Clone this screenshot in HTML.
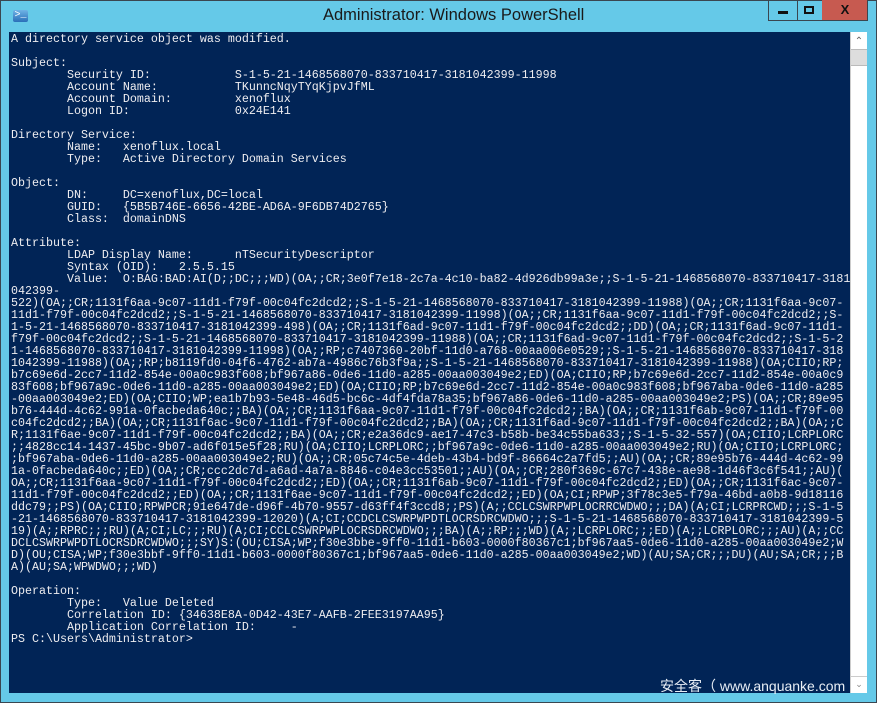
<!DOCTYPE html>
<html><head><meta charset="utf-8"><style>
html,body{margin:0;padding:0}
body{width:877px;height:703px;background:#65c9e8;position:relative;overflow:hidden;font-family:"Liberation Sans",sans-serif}
.frame{position:absolute;left:0;top:0;width:875px;height:701px;border:1px solid #3a4650}
.title{position:absolute;left:323px;top:6px;text-align:left;font-size:16.5px;color:#1a1a1a;white-space:nowrap}
.icon{position:absolute;left:13px;top:10px;width:15px;height:12px;background:linear-gradient(#6fb3e6,#2a6fb8);border-radius:2px;color:#fff;font-size:10px;line-height:12px;text-align:center;font-family:"Liberation Mono",monospace}
.btn{position:absolute;top:0;height:21px;border:1px solid #3a4650;border-top:none;box-sizing:border-box}
.con{position:absolute;left:9px;top:32px;width:841px;height:661px;background:#012456}
pre{position:absolute;left:11px;top:33px;margin:0;font-family:"Liberation Mono",monospace;font-size:11.67px;line-height:12px;color:#eeedf0;white-space:pre}
.sb{position:absolute;left:850px;top:32px;width:17px;height:661px;background:#fff;border-left:1px solid #ccc;box-sizing:border-box}
.wm{position:absolute;left:660px;top:676px;color:#e8eef5;font-size:14px;font-family:"Liberation Sans","Noto Sans CJK SC",sans-serif;white-space:nowrap}
</style></head><body>
<div class="frame"></div>
<div class="icon">&gt;_</div>
<div class="title">Administrator: Windows PowerShell</div>
<div class="btn" style="left:768px;width:30px"><div style="position:absolute;left:9px;top:11px;width:10px;height:3px;background:#111"></div></div>
<div class="btn" style="left:797px;width:26px;border-left:none"><div style="position:absolute;left:7px;top:6px;width:6px;height:4px;border:2px solid #111"></div></div>
<div class="btn" style="left:822px;width:46px;background:#c75a50;border-left:none"><div style="position:absolute;left:0;width:46px;top:2px;text-align:center;font-weight:bold;font-size:13px;color:#111">X</div></div>
<div class="con"></div>
<pre>A directory service object was modified.

Subject:
        Security ID:            S-1-5-21-1468568070-833710417-3181042399-11998
        Account Name:           TKunncNqyTYqKjpvJfML
        Account Domain:         xenoflux
        Logon ID:               0x24E141

Directory Service:
        Name:   xenoflux.local
        Type:   Active Directory Domain Services

Object:
        DN:     DC=xenoflux,DC=local
        GUID:   {5B5B746E-6656-42BE-AD6A-9F6DB74D2765}
        Class:  domainDNS

Attribute:
        LDAP Display Name:      nTSecurityDescriptor
        Syntax (OID):   2.5.5.15
        Value:  O:BAG:BAD:AI(D;;DC;;;WD)(OA;;CR;3e0f7e18-2c7a-4c10-ba82-4d926db99a3e;;S-1-5-21-1468568070-833710417-3181
042399-
522)(OA;;CR;1131f6aa-9c07-11d1-f79f-00c04fc2dcd2;;S-1-5-21-1468568070-833710417-3181042399-11988)(OA;;CR;1131f6aa-9c07-
11d1-f79f-00c04fc2dcd2;;S-1-5-21-1468568070-833710417-3181042399-11998)(OA;;CR;1131f6aa-9c07-11d1-f79f-00c04fc2dcd2;;S-
1-5-21-1468568070-833710417-3181042399-498)(OA;;CR;1131f6ad-9c07-11d1-f79f-00c04fc2dcd2;;DD)(OA;;CR;1131f6ad-9c07-11d1-
f79f-00c04fc2dcd2;;S-1-5-21-1468568070-833710417-3181042399-11988)(OA;;CR;1131f6ad-9c07-11d1-f79f-00c04fc2dcd2;;S-1-5-2
1-1468568070-833710417-3181042399-11998)(OA;;RP;c7407360-20bf-11d0-a768-00aa006e0529;;S-1-5-21-1468568070-833710417-318
1042399-11988)(OA;;RP;b8119fd0-04f6-4762-ab7a-4986c76b3f9a;;S-1-5-21-1468568070-833710417-3181042399-11988)(OA;CIIO;RP;
b7c69e6d-2cc7-11d2-854e-00a0c983f608;bf967a86-0de6-11d0-a285-00aa003049e2;ED)(OA;CIIO;RP;b7c69e6d-2cc7-11d2-854e-00a0c9
83f608;bf967a9c-0de6-11d0-a285-00aa003049e2;ED)(OA;CIIO;RP;b7c69e6d-2cc7-11d2-854e-00a0c983f608;bf967aba-0de6-11d0-a285
-00aa003049e2;ED)(OA;CIIO;WP;ea1b7b93-5e48-46d5-bc6c-4df4fda78a35;bf967a86-0de6-11d0-a285-00aa003049e2;PS)(OA;;CR;89e95
b76-444d-4c62-991a-0facbeda640c;;BA)(OA;;CR;1131f6aa-9c07-11d1-f79f-00c04fc2dcd2;;BA)(OA;;CR;1131f6ab-9c07-11d1-f79f-00
c04fc2dcd2;;BA)(OA;;CR;1131f6ac-9c07-11d1-f79f-00c04fc2dcd2;;BA)(OA;;CR;1131f6ad-9c07-11d1-f79f-00c04fc2dcd2;;BA)(OA;;C
R;1131f6ae-9c07-11d1-f79f-00c04fc2dcd2;;BA)(OA;;CR;e2a36dc9-ae17-47c3-b58b-be34c55ba633;;S-1-5-32-557)(OA;CIIO;LCRPLORC
;;4828cc14-1437-45bc-9b07-ad6f015e5f28;RU)(OA;CIIO;LCRPLORC;;bf967a9c-0de6-11d0-a285-00aa003049e2;RU)(OA;CIIO;LCRPLORC;
;bf967aba-0de6-11d0-a285-00aa003049e2;RU)(OA;;CR;05c74c5e-4deb-43b4-bd9f-86664c2a7fd5;;AU)(OA;;CR;89e95b76-444d-4c62-99
1a-0facbeda640c;;ED)(OA;;CR;ccc2dc7d-a6ad-4a7a-8846-c04e3cc53501;;AU)(OA;;CR;280f369c-67c7-438e-ae98-1d46f3c6f541;;AU)(
OA;;CR;1131f6aa-9c07-11d1-f79f-00c04fc2dcd2;;ED)(OA;;CR;1131f6ab-9c07-11d1-f79f-00c04fc2dcd2;;ED)(OA;;CR;1131f6ac-9c07-
11d1-f79f-00c04fc2dcd2;;ED)(OA;;CR;1131f6ae-9c07-11d1-f79f-00c04fc2dcd2;;ED)(OA;CI;RPWP;3f78c3e5-f79a-46bd-a0b8-9d18116
ddc79;;PS)(OA;CIIO;RPWPCR;91e647de-d96f-4b70-9557-d63ff4f3ccd8;;PS)(A;;CCLCSWRPWPLOCRRCWDWO;;;DA)(A;CI;LCRPRCWD;;;S-1-5
-21-1468568070-833710417-3181042399-12020)(A;CI;CCDCLCSWRPWPDTLOCRSDRCWDWO;;;S-1-5-21-1468568070-833710417-3181042399-5
19)(A;;RPRC;;;RU)(A;CI;LC;;;RU)(A;CI;CCLCSWRPWPLOCRSDRCWDWO;;;BA)(A;;RP;;;WD)(A;;LCRPLORC;;;ED)(A;;LCRPLORC;;;AU)(A;;CC
DCLCSWRPWPDTLOCRSDRCWDWO;;;SY)S:(OU;CISA;WP;f30e3bbe-9ff0-11d1-b603-0000f80367c1;bf967aa5-0de6-11d0-a285-00aa003049e2;W
D)(OU;CISA;WP;f30e3bbf-9ff0-11d1-b603-0000f80367c1;bf967aa5-0de6-11d0-a285-00aa003049e2;WD)(AU;SA;CR;;;DU)(AU;SA;CR;;;B
A)(AU;SA;WPWDWO;;;WD)

Operation:
        Type:   Value Deleted
        Correlation ID: {34638E8A-0D42-43E7-AAFB-2FEE3197AA95}
        Application Correlation ID:     -
PS C:\Users\Administrator&gt;</pre>
<div class="sb">
  <div style="position:absolute;left:0;top:0;width:16px;height:17px;text-align:center;font-size:10px;color:#666;line-height:20px">&#8963;</div>
  <div style="position:absolute;left:0;top:17px;width:16px;height:17px;background:#ddd;border-top:1px solid #bbb;border-bottom:1px solid #bbb;box-sizing:border-box"></div>
  <div style="position:absolute;left:0;top:644px;width:16px;height:17px;text-align:center;font-size:9px;color:#888;line-height:14px;border-top:1px solid #ccc;box-sizing:border-box">&#8964;</div>
</div>
<div class="wm">安全客（ www.anquanke.com</div>
</body></html>
